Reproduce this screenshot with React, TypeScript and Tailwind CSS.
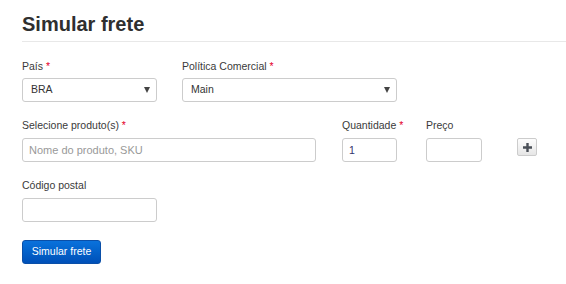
const font = { fontFamily: '"Liberation Sans", Arial, sans-serif' }

function Label({ text, required }: { text: string; required?: boolean }) {
  return (
    <label className="block h-[14px] leading-[14px] text-[10.5px] text-[#3a3a3a] mb-[5px] whitespace-nowrap">
      {text}
      {required && <span className="text-[#e4002b]"> *</span>}
    </label>
  )
}

function Select({ value, width }: { value: string; width: string }) {
  return (
    <div
      className={`${width} h-[24px] flex items-center justify-between border border-[#ccc] rounded-[3px] bg-white pl-[8px] pr-[6px] text-[10.5px] text-[#333]`}
    >
      <span>{value}</span>
      <span className="w-0 h-0 border-l-[3.5px] border-r-[3.5px] border-t-[6px] border-l-transparent border-r-transparent border-t-[#444]" />
    </div>
  )
}

export default function App() {
  return (
    <div className="w-[566px] h-[284px] bg-white overflow-hidden pl-[22px]" style={font}>
      <div className="border-b border-[#e8e8e8] h-[42px] pt-[10px]">
        <h1 className="text-[20px] leading-[28px] font-bold text-[#2f2f2f]">Simular frete</h1>
      </div>

      <div className="pt-[17px] flex gap-[25px]">
        <div className="w-[135px]">
          <Label text="País" required />
          <Select value="BRA" width="w-[135px]" />
        </div>
        <div className="w-[215px]">
          <Label text="Política Comercial" required />
          <Select value="Main" width="w-[215px]" />
        </div>
      </div>

      <div className="pt-[16px] flex">
        <div className="w-[294px] shrink-0">
          <Label text="Selecione produto(s)" required />
          <input
            placeholder="Nome do produto, SKU"
            className="w-[294px] h-[24px] border border-[#ccc] rounded-[3px] px-[6px] text-[11px] text-[#333] placeholder:text-[#999] outline-none"
          />
        </div>
        <div className="w-[55px] shrink-0 ml-[26px]">
          <Label text="Quantidade" required />
          <input
            defaultValue="1"
            className="w-[55px] h-[24px] border border-[#ccc] rounded-[3px] px-[6px] text-[10.5px] text-[#33336a] outline-none"
          />
        </div>
        <div className="w-[56px] shrink-0 ml-[29px]">
          <Label text="Preço" />
          <input className="w-[56px] h-[24px] border border-[#ccc] rounded-[3px] px-[6px] text-[10.5px] outline-none" />
        </div>
        <div className="ml-[35px] pt-[20px]">
          <button className="w-[20px] h-[18px] flex items-center justify-center border border-[#ccc] rounded-[2px] bg-gradient-to-b from-[#fdfdfd] to-[#e6e6e6]">
            <svg width="9" height="9" viewBox="0 0 9 9">
              <path d="M3.3 0h2.4v3.3H9v2.4H5.7V9H3.3V5.7H0V3.3h3.3z" fill="#4a4f57" />
            </svg>
          </button>
        </div>
      </div>

      <div className="pt-[16px]">
        <Label text="Código postal" />
        <input className="w-[135px] h-[24px] border border-[#ccc] rounded-[3px] px-[6px] text-[10.5px] outline-none" />
      </div>

      <div className="pt-[16px]">
        <button className="w-[79px] h-[24px] rounded-[3px] border border-[#0a4fa8] bg-gradient-to-b from-[#0a72dc] to-[#0050b8] text-white text-[10.5px]">
          Simular frete
        </button>
      </div>
    </div>
  )
}
